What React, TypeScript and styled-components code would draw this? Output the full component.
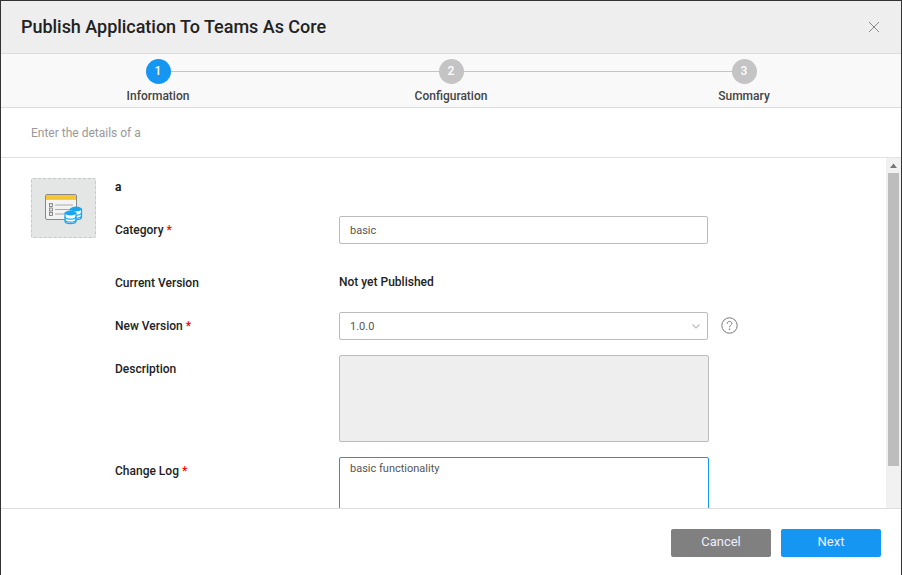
import React from "react";
import styled, { createGlobalStyle } from "styled-components";

const Global = createGlobalStyle`
  html, body { margin: 0; padding: 0; height: 100%; background: #fff; overflow: hidden; }
  #root { height: 100%; }
  * { box-sizing: border-box; }
  body { font-family: Roboto, "Liberation Sans", sans-serif; }
`;

const Modal = styled.div`
  width: 902px; height: 575px; display: flex; flex-direction: column;
  border: 1px solid #333; border-bottom: 0; background: #fff; color: #222;
`;
const Header = styled.header`
  flex: none; height: 53px; background: #eee; border-bottom: 1px solid #ddd;
  display: flex; align-items: center; justify-content: space-between; padding: 0 20px;
`;
const Title = styled.h1`margin: 0; font-size: 18px; font-weight: 500; color: #222; line-height: 52px; letter-spacing: -0.03px;`;
const CloseButton = styled.button`
  border: 0; background: none; padding: 0; width: 12px; height: 12px; display: flex; margin-right: 1px;
  svg { display: block; }
`;
const Stepper = styled.nav`
  flex: none; height: 54px; background: #f9f9f9; border-bottom: 1px solid #ddd;
  display: grid; grid-template-columns: repeat(3, 293px); justify-content: center; padding-top: 5px;
`;
const Step = styled.div<{ $last?: boolean }>`
  position: relative; display: flex; flex-direction: column; align-items: center;
  &::after {
    content: ""; display: ${(p) => (p.$last ? "none" : "block")}; position: absolute;
    top: 12px; left: 50%; width: 100%; height: 1px; background: #c4c4c4;
  }
`;
const Circle = styled.span<{ $active?: boolean }>`
  position: relative; z-index: 1; width: 25px; height: 25px; border-radius: 50%;
  background: ${(p) => (p.$active ? "#1696f3" : "#c4c4c4")}; color: #fff;
  font-size: 12px; font-weight: 500; line-height: 25px; text-align: center;
`;
const StepLabel = styled.span`margin-top: 5px; font-size: 12px; font-weight: 500; line-height: 14px; color: #444;`;
const Intro = styled.div`
  flex: none; height: 50px; border-bottom: 1px solid #e2e2e2; padding: 1px 0 0 30px;
  font-size: 12px; line-height: 49px; color: #999;
`;
const Body = styled.main`flex: 1; min-height: 0; display: flex;`;
const ScrollArea = styled.div`flex: 1; min-width: 0; overflow: hidden;`;
const ScrollRail = styled.div`
  flex: none; width: 15px; background: #f1f1f1; display: flex; flex-direction: column; align-items: center;
  svg { display: block; flex: none; }
`;
const ScrollThumb = styled.div`flex: none; width: 11px; height: 293px; background: #bdbdbd;`;
const Content = styled.div`display: flex; gap: 19px; padding: 20px 0 0 30px; height: 382px;`;
const Thumb = styled.div`
  flex: none; width: 65px; height: 60px; background: #e4e6e6; border: 1px dashed #c8c8c8; border-radius: 2px;
  display: flex; align-items: center; justify-content: center;
`;
const Form = styled.div`flex: 1; display: flex; flex-direction: column;`;
const AppName = styled.div`font-size: 12px; font-weight: 700; line-height: 18px; color: #222;`;
const Row = styled.div<{ $top: number }>`
  display: grid; grid-template-columns: 224px auto; align-items: start; margin-top: ${(p) => p.$top}px;
`;
const Label = styled.label<{ $pad: number }>`
  font-size: 12px; font-weight: 500; line-height: 14px; color: #222; padding-top: ${(p) => p.$pad}px;
`;
const Req = styled.span`color: #f00; margin-left: 3px;`;
const Value = styled.div`font-size: 12px; font-weight: 500; line-height: 14px; color: #222;`;
const Field = styled.div`
  width: 369px; height: 28px; border: 1px solid #bbb; border-radius: 2px; background: #fff;
  font-size: 11px; line-height: 14px; padding: 1px 10px 0; color: #555;
  display: flex; align-items: center; justify-content: space-between;
`;
const Chevron = styled.svg`margin: -1px -3px 0 0;`;
const FieldWrap = styled.div`display: flex; align-items: center; gap: 13px;`;
const Help = styled.svg`margin-top: -1px;`;
const Area = styled.div<{ $focus?: boolean }>`
  width: 370px; height: ${(p) => (p.$focus ? 83 : 87)}px; border-radius: 2px;
  border: 1px solid ${(p) => (p.$focus ? "#1696f3" : "#bbb")};
  background: ${(p) => (p.$focus ? "#fff" : "#eee")};
  font-size: 11px; line-height: 14px; padding: 4px 10px; color: #555;
`;
const Footer = styled.footer`
  flex: none; height: 67px; border-top: 1px solid #ddd; background: #fff;
  display: flex; justify-content: flex-end; gap: 10px; padding: 20px 20px 0 0;
`;
const Button = styled.button<{ $primary?: boolean }>`
  width: 100px; height: 28px; border: 0; border-radius: 2px; padding: 0 0 2px;
  background: ${(p) => (p.$primary ? "#1696f3" : "#808080")}; color: #eef;
  font-family: inherit; font-size: 13px; line-height: 26px;
`;

const AppIcon = () => (
  <svg width="38" height="36" viewBox="0 0 38 36">
    <rect x="0.5" y="4.5" width="31" height="25" rx="1.5" fill="#f3f3f3" stroke="#8a8a8a" />
    <rect x="1" y="5" width="30" height="4" fill="#f7c531" />
    <rect x="1" y="9" width="30" height="1" fill="#c9c9c9" />
    {[15, 19.5, 24].map((y) => (
      <g key={y}>
        <rect x="4.5" y={y - 1.5} width="3" height="3" fill="#e8e8e8" stroke="#777" strokeWidth=".8" />
        <line x1="10" x2="28" y1={y} y2={y} stroke="#a9a9a9" />
      </g>
    ))}
    {[[31, 19], [25.5, 23]].map(([x, y]) => (
      <g key={x}>
        <path d={`M${x - 5.5} ${y}v8c0 1.6 2.5 2.7 5.5 2.7s5.5-1.1 5.5-2.7v-8z`} fill="#fff" stroke="#19a6f0" strokeWidth="1.2" />
        <ellipse cx={x} cy={y} rx="5.5" ry="2.4" fill="#19a6f0" />
        <path d={`M${x - 5.5} ${y + 3.5}c0 1.6 2.5 2.6 5.5 2.6s5.5-1 5.5-2.6M${x - 5.5} ${y + 6.5}c0 1.6 2.5 2.6 5.5 2.6s5.5-1 5.5-2.6`} fill="none" stroke="#19a6f0" strokeWidth="1.2" />
      </g>
    ))}
  </svg>
);

export default function App() {
  return (
    <>
      <Global />
      <Modal>
        <Header>
          <Title>Publish Application To Teams As Core</Title>
          <CloseButton aria-label="Close">
            <svg width="12" height="12" viewBox="0 0 12 12">
              <path d="M1 1l10 10M11 1L1 11" stroke="#888" strokeWidth="1" fill="none" />
            </svg>
          </CloseButton>
        </Header>
        <Stepper>
          <Step><Circle $active>1</Circle><StepLabel>Information</StepLabel></Step>
          <Step><Circle>2</Circle><StepLabel>Configuration</StepLabel></Step>
          <Step $last><Circle>3</Circle><StepLabel>Summary</StepLabel></Step>
        </Stepper>
        <Intro>Enter the details of a</Intro>
        <Body>
          <ScrollArea>
            <Content>
              <Thumb><AppIcon /></Thumb>
              <Form>
                <AppName>a</AppName>
                <Row $top={20}>
                  <Label $pad={7}>Category<Req>*</Req></Label>
                  <Field>basic</Field>
                </Row>
                <Row $top={31}>
                  <Label $pad={1}>Current Version</Label>
                  <Value>Not yet Published</Value>
                </Row>
                <Row $top={22}>
                  <Label $pad={7}>New Version<Req>*</Req></Label>
                  <FieldWrap>
                    <Field>
                      1.0.0
                      <Chevron width="8" height="5" viewBox="0 0 8 5">
                        <path d="M0.5 0.5l3.5 3.5 3.5-3.5" stroke="#bbb" strokeWidth="1.2" fill="none" />
                      </Chevron>
                    </Field>
                    <Help width="17" height="17" viewBox="0 0 17 17">
                      <circle cx="8.5" cy="8.5" r="7.7" fill="none" stroke="#777" />
                      <path d="M6.2 6.7c0-1.4 1-2.3 2.3-2.3s2.3.9 2.3 2.1c0 1.6-2.3 1.9-2.3 3.7" fill="none" stroke="#777" />
                      <circle cx="8.5" cy="12.3" r=".8" fill="#777" />
                    </Help>
                  </FieldWrap>
                </Row>
                <Row $top={15}>
                  <Label $pad={7}>Description</Label>
                  <Area />
                </Row>
                <Row $top={15}>
                  <Label $pad={7}>Change Log<Req>*</Req></Label>
                  <Area $focus>basic functionality</Area>
                </Row>
              </Form>
            </Content>
          </ScrollArea>
          <ScrollRail>
            <svg width="15" height="15" viewBox="0 0 15 15">
              <path d="M7.5 5.5L11 10H4z" fill="#777" />
            </svg>
            <ScrollThumb />
          </ScrollRail>
        </Body>
        <Footer>
          <Button>Cancel</Button>
          <Button $primary>Next</Button>
        </Footer>
      </Modal>
    </>
  );
}
